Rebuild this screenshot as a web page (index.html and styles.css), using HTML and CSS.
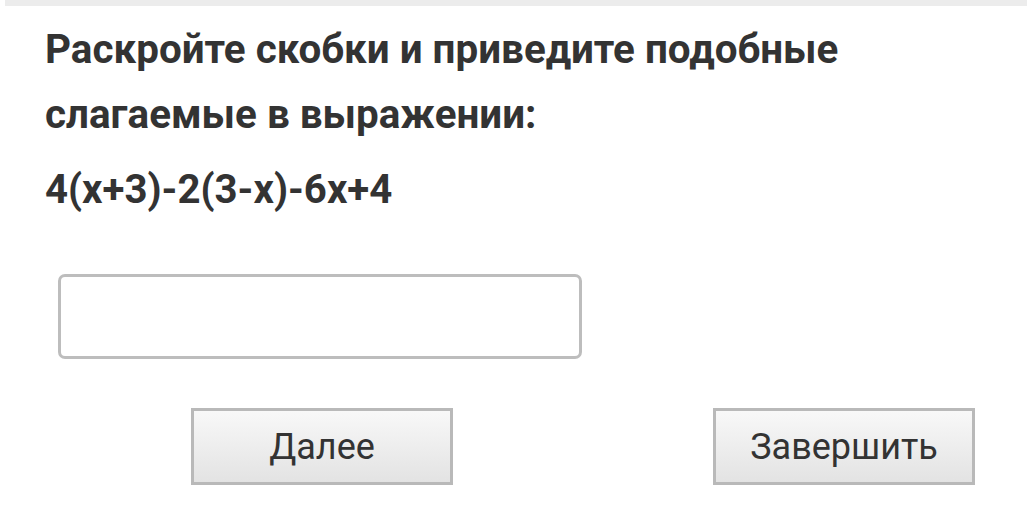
FILE: index.html
```html
<!DOCTYPE html>
<html lang="ru">
<head>
<meta charset="utf-8">
<link rel="stylesheet" href="styles.css">
</head>
<body>
<div class="topbar"></div>
<main class="card">
  <p class="question">Раскройте скобки и приведите подобные слагаемые в выражении:</p>
  <p class="expr">4(x+3)-2(3-x)-6x+4</p>
  <input class="answer" type="text">
  <div class="buttons">
    <button class="btn">Далее</button>
    <button class="btn">Завершить</button>
  </div>
</main>
<div class="bottomline"></div>
</body>
</html>
```
FILE: styles.css
```css
html, body {
  margin: 0;
  padding: 0;
  background: #fff;
}
body {
  width: 1027px;
  height: 518px;
  overflow: hidden;
  font-family: Roboto, "Liberation Sans", sans-serif;
  color: #333;
}
.topbar {
  height: 6px;
  margin-left: 5px;
  background: #ececec;
}
.card {
  padding: 0 0 0 45px;
  height: 507px;
  box-sizing: border-box;
}
.question {
  margin: 11px 0 0;
  width: 860px;
  font-size: 40.4px;
  font-weight: 700;
  line-height: 65px;
}
.expr {
  margin: 18px 0 0;
  font-size: 40.2px;
  font-weight: 700;
  line-height: 50px;
}
.answer {
  display: block;
  margin: 59px 0 0 13px;
  width: 524px;
  height: 85px;
  box-sizing: border-box;
  border: 3px solid #bdbdbd;
  border-radius: 7px;
  background: #fff;
  outline: none;
}
.buttons {
  display: flex;
  gap: 260px;
  margin: 49px 0 0 146px;
}
.btn {
  width: 262px;
  height: 77px;
  box-sizing: border-box;
  border: 3px solid #b9b9b9;
  border-radius: 0;
  background: linear-gradient(#f8f8f8, #e3e3e3);
  font-family: Roboto, "Liberation Sans", sans-serif;
  font-size: 36px;
  color: #333;
  padding: 0;
}
.bottomline {
  height: 3px;
  background: #e6e6e6;
}
```
